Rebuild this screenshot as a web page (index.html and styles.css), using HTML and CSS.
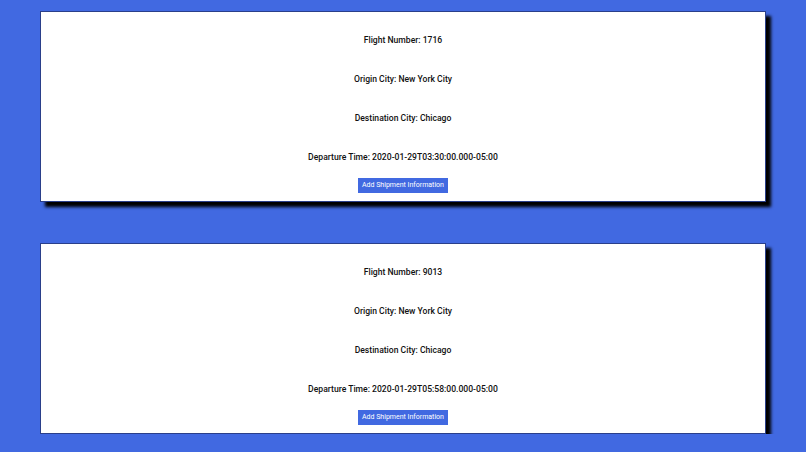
FILE: index.html
```html
<!DOCTYPE html>
<html>
<head>
<meta charset="utf-8">
<link rel="stylesheet" href="styles.css">
</head>
<body>
<div class="list">
  <div class="card">
    <p class="line">Flight Number: 1716</p>
    <p class="line">Origin City: New York City</p>
    <p class="line">Destination City: Chicago</p>
    <p class="line">Departure Time: 2020-01-29T03:30:00.000-05:00</p>
    <button class="btn">Add Shipment Information</button>
  </div>
  <div class="card">
    <p class="line">Flight Number: 9013</p>
    <p class="line">Origin City: New York City</p>
    <p class="line">Destination City: Chicago</p>
    <p class="line">Departure Time: 2020-01-29T05:58:00.000-05:00</p>
    <button class="btn">Add Shipment Information</button>
  </div>
</div>
</body>
</html>
```
FILE: styles.css
```css
html, body {
  margin: 0;
  padding: 0;
  background: #4169e1;
  font-family: Roboto, "Open Sans", sans-serif;
}
.list {
  display: flex;
  flex-direction: column;
  align-items: center;
  gap: 41px;
  padding-top: 11px;
}
.card {
  box-sizing: border-box;
  width: 90%;
  height: 191px;
  background: #fff;
  border: 1px solid #2a3f8a;
  box-shadow: 5px 5px 3px #000;
  display: flex;
  flex-direction: column;
  align-items: center;
  padding-top: 19px;
  gap: 21px;
}
.line {
  margin: 0;
  font-size: 8.6px;
  font-weight: 500;
  line-height: 18px;
  color: #111;
}
.btn {
  margin-top: -9px;
  width: 90px;
  height: 15px;
  padding: 0;
  border: none;
  background: #4169e1;
  color: #fff;
  font-family: Roboto, sans-serif;
  font-size: 7px;
  line-height: 15px;
  white-space: nowrap;
}
```
